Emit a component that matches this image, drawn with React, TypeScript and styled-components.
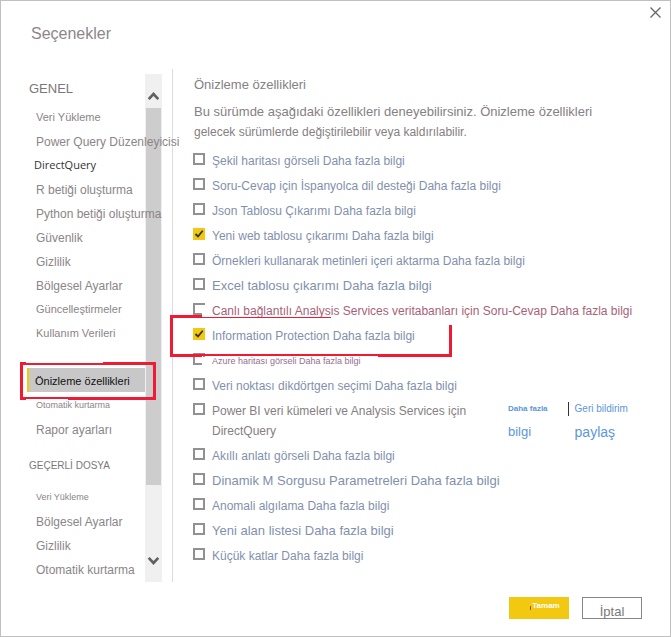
import React from 'react';
import styled, { createGlobalStyle } from 'styled-components';

const Global = createGlobalStyle`
  *, *::before, *::after { box-sizing: border-box; }
  body { margin: 0; background: #fff; font-family: "Liberation Sans", Arial, sans-serif; font-size: 12px; }
  button { font-family: inherit; }
  h1, h2, h3, p, ul { margin: 0; padding: 0; font-weight: 400; }
  ul { list-style: none; }
`;

const Dialog = styled.main`
  display: flex;
  flex-direction: column;
  min-height: 100vh;
  border: 1px solid #c0c0c0;
  background: #fff;
`;

const Header = styled.header`
  display: flex;
  justify-content: space-between;
  align-items: flex-start;
  height: 68px;
  padding: 5px 8px 0 30px;
`;

const Title = styled.h1`
  padding-top: 18px;
  font-size: 16px;
  line-height: 20px;
  color: #8c8789;
`;

const CloseButton = styled.button`
  display: flex;
  padding: 0;
  border: 0;
  background: none;
  color: #666;
`;

const Body = styled.div`
  display: grid;
  grid-template-columns: 171px minmax(0, 1fr);
  min-height: 513px;
`;

const Sidebar = styled.nav`
  position: relative;
  display: grid;
  grid-template-columns: 118px 17px;
  padding: 5px 0 0 26px;
`;

const Lists = styled.div`
  position: relative;
  z-index: 1;
  white-space: nowrap;
`;

const GroupTitle = styled.h2<{ $minor?: boolean }>`
  height: ${(p) => (p.$minor ? 34 : 31)}px;
  margin-top: ${(p) => (p.$minor ? 10 : 0)}px;
  padding: 3px 0 0 2px;
  font-size: ${(p) => (p.$minor ? 10 : 13)}px;
  line-height: 24px;
  color: #7b7779;
`;

const NavItem = styled.li<{ $size?: number; $spaced?: boolean }>`
  height: 24px;
  margin: ${(p) => (p.$spaced ? '23px 0 1px' : '0')};
  font-size: ${(p) => p.$size ?? 12}px;
  line-height: ${(p) => (p.$size && !p.$spaced ? 24 : 26)}px;
`;

const NavLink = styled.a<{ $current?: boolean; $dark?: boolean }>`
  display: block;
  height: 24px;
  padding-left: ${(p) => (p.$current ? 6 : p.$dark ? 7 : 9)}px;
  border-left: ${(p) => (p.$current ? '2px solid #f2c811' : '0')};
  background: ${(p) => (p.$current ? '#c8c8c8' : 'none')};
  color: ${(p) => (p.$current ? '#111' : p.$dark ? '#333' : '#8a8588')};
  font-family: ${(p) => (p.$dark ? '"Open Sans", "Noto Sans", sans-serif' : 'inherit')};
  text-decoration: none;
`;

const ScrollTrack = styled.div`
  display: grid;
  grid-template-rows: 34px 377px 1fr;
  justify-items: center;
  background: #f0f0f0;
  color: #606060;
`;

const ScrollButton = styled.button<{ $end?: boolean }>`
  display: flex;
  align-self: end;
  padding: 0;
  margin-bottom: ${(p) => (p.$end ? 16 : 7)}px;
  border: 0;
  background: none;
  color: inherit;
`;

const ScrollThumb = styled.div`
  width: 15px;
  background: #cdcdcd;
`;

const Content = styled.section`
  position: relative;
  padding: 4px 16px 0 21px;
  border-left: 1px solid #dcdcdc;
`;

const Heading = styled.h2`
  font-size: 13px;
  line-height: 24px;
  color: #858083;
`;

const Intro = styled.p<{ $size: number }>`
  font-size: ${(p) => p.$size}px;
  line-height: 20px;
  color: #858083;
`;

const IntroBlock = styled.div`
  padding-top: 5px;
  margin-bottom: 6px;
`;

const Option = styled.li<{ $tall?: boolean }>`
  display: flex;
  align-items: flex-start;
  height: ${(p) => (p.$tall ? 45 : 25)}px;
`;

const Check = styled.input`
  flex: none;
  appearance: none;
  width: 12px;
  height: 12px;
  margin: 5px 7px 0 -1px;
  border: 2px solid #919191;
  background: #fff;
  &:checked {
    border: 0;
    background: #f2c811 url("data:image/svg+xml,%3Csvg xmlns='http://www.w3.org/2000/svg' viewBox='0 0 12 12'%3E%3Cpath d='M2.5 6 5 8.5 9.7 2.8' fill='none' stroke='%23333' stroke-width='1.8'/%3E%3C/svg%3E");
  }
`;

const OptionLabel = styled.label<{ $tone: string; $size: number }>`
  padding-top: 3px;
  font-size: ${(p) => p.$size}px;
  line-height: 20px;
  color: ${(p) => p.$tone};
  white-space: nowrap;
`;

const Multiline = styled.span`
  display: block;
  width: 273px;
  white-space: normal;
`;

const LabelLine = styled.span`
  display: block;
`;

const SideLink = styled.a<{ $bar?: boolean }>`
  display: flex;
  flex-direction: column;
  margin-left: ${(p) => (p.$bar ? 20 : 16)}px;
  padding-top: 2px;
  color: #5b97dc;
  text-decoration: none;
`;

const LinkLine = styled.span<{ $size: number; $bold?: boolean; $bar?: boolean }>`
  padding-left: 6px;
  border-left: 1px solid ${(p) => (p.$bar ? '#333' : 'transparent')};
  font-size: ${(p) => p.$size}px;
  font-weight: ${(p) => (p.$bold ? 700 : 400)};
  line-height: ${(p) => (p.$size > 12 ? 24 : 14)}px;
  margin: ${(p) => (p.$size > 12 ? '2px 0 0' : '2px 0')};
  white-space: nowrap;
`;

const Callout = styled.svg<{ $place: 'nav' | 'option' }>`
  position: absolute;
  z-index: 2;
  pointer-events: none;
  fill: #f01a35;
  left: ${(p) => (p.$place === 'nav' ? 19 : -3)}px;
  top: ${(p) => (p.$place === 'nav' ? 293 : 236)}px;
`;

const Footer = styled.footer`
  display: flex;
  justify-content: flex-end;
  gap: 13px;
  padding: 15px 28px 17px;
`;

const Button = styled.button<{ $primary?: boolean }>`
  display: flex;
  justify-content: center;
  width: 60px;
  height: 22px;
  padding: ${(p) => (p.$primary ? '0 0 0 12px' : '5px 0 0')};
  border: ${(p) => (p.$primary ? '0' : '1px solid #868686')};
  background: ${(p) => (p.$primary ? '#f2c811' : '#fff')};
  font-size: ${(p) => (p.$primary ? 8 : 13)}px;
  font-weight: ${(p) => (p.$primary ? 700 : 400)};
  line-height: 18px;
  color: ${(p) => (p.$primary ? '#fff' : '#7b7779')};
`;

const Caret = styled.span`
  width: 1px;
  height: 4px;
  margin: 9px 1px 0 0;
  background: #a0522d;
`;

const Chevron = ({ down }: { down?: boolean }) => (
  <svg width="11" height="10" viewBox="0 0 11 10" fill="none" stroke="currentColor" strokeWidth="2.6">
    <path d={down ? 'M0.7 1.8 5.5 7 10.3 1.8' : 'M0.7 8.2 5.5 3 10.3 8.2'} />
  </svg>
);

const NavCallout = () => (
  <Callout $place="nav" width="136" height="38" viewBox="0 0 136 38" aria-hidden="true">
    <path d="M0 0H6V1H83V0H136V38H48V37H6V38H0ZM3 3V35H133V3Z" fillRule="evenodd" />
  </Callout>
);

const OptionCallout = () => (
  <Callout $place="option" width="282" height="62" viewBox="0 0 282 62" aria-hidden="true">
    <path d="M32 0H41V12H32ZM32 52H41V62H32Z" fill="#fff" />
    <path d="M0 10H32V12H161V13H3V49H279V20H282V52H208V51H32V52H0Z" />
  </Callout>
);

type Nav = { text: string; size?: number; current?: boolean; dark?: boolean };

const general: Nav[] = [
  { text: 'Veri Yükleme', size: 11 },
  { text: 'Power Query Düzenleyicisi' },
  { text: 'DirectQuery', size: 11, dark: true },
  { text: 'R betiği oluşturma' },
  { text: 'Python betiği oluşturma' },
  { text: 'Güvenlik' },
  { text: 'Gizlilik' },
  { text: 'Bölgesel Ayarlar' },
  { text: 'Güncelleştirmeler', size: 11 },
  { text: 'Kullanım Verileri', size: 11 },
  { text: 'Önizleme özellikleri', size: 11, current: true },
  { text: 'Otomatik kurtarma', size: 9 },
  { text: 'Rapor ayarları' },
];

const currentFile: Nav[] = [
  { text: 'Veri Yükleme', size: 9 },
  { text: 'Bölgesel Ayarlar' },
  { text: 'Gizlilik' },
  { text: 'Otomatik kurtarma' },
];

type Opt = { text: string; on?: boolean; tone?: string; size?: number };

const BLUE = '#8290ac';

const before: Opt[] = [
  { text: 'Şekil haritası görseli Daha fazla bilgi' },
  { text: 'Soru-Cevap için İspanyolca dil desteği Daha fazla bilgi' },
  { text: 'Json Tablosu Çıkarımı Daha fazla bilgi' },
  { text: 'Yeni web tablosu çıkarımı Daha fazla bilgi', on: true },
  { text: 'Örnekleri kullanarak metinleri içeri aktarma Daha fazla bilgi' },
  { text: 'Excel tablosu çıkarımı Daha fazla bilgi', size: 13 },
  { text: 'Canlı bağlantılı Analysis Services veritabanları için Soru-Cevap Daha fazla bilgi', tone: '#a95f78' },
  { text: 'Information Protection Daha fazla bilgi', on: true },
  { text: 'Azure haritası görseli Daha fazla bilgi', tone: '#94708f', size: 9 },
  { text: 'Veri noktası dikdörtgen seçimi Daha fazla bilgi' },
];

const after: Opt[] = [
  { text: 'Akıllı anlatı görseli Daha fazla bilgi' },
  { text: 'Dinamik M Sorgusu Parametreleri Daha fazla bilgi', size: 13 },
  { text: 'Anomali algılama Daha fazla bilgi' },
  { text: 'Yeni alan listesi Daha fazla bilgi', size: 13 },
  { text: 'Küçük katlar Daha fazla bilgi' },
];

const OptionRow = ({ item, id }: { item: Opt; id: string }) => (
  <Option>
    <Check type="checkbox" id={id} defaultChecked={item.on} />
    <OptionLabel htmlFor={id} $tone={item.tone ?? BLUE} $size={item.size ?? 12}>{item.text}</OptionLabel>
  </Option>
);

const NavList = ({ items }: { items: Nav[] }) => (
  <ul>
    {items.map((n) => (
      <NavItem key={n.text} $size={n.size} $spaced={n.current}>
        <NavLink href="#" $current={n.current} $dark={n.dark} aria-current={n.current ? 'page' : undefined}>{n.text}</NavLink>
      </NavItem>
    ))}
  </ul>
);

export default function App() {
  return (
    <>
      <Global />
      <Dialog>
        <Header>
          <Title>Seçenekler</Title>
          <CloseButton aria-label="Kapat">
            <svg width="13" height="13" viewBox="0 0 13 13" stroke="currentColor" strokeWidth="1.3">
              <path d="M1.5 1.5 11.5 11.5M11.5 1.5 1.5 11.5" />
            </svg>
          </CloseButton>
        </Header>
        <Body>
          <Sidebar>
            <Lists>
              <GroupTitle>GENEL</GroupTitle>
              <NavList items={general} />
              <GroupTitle $minor>GEÇERLİ DOSYA</GroupTitle>
              <NavList items={currentFile} />
            </Lists>
            <ScrollTrack>
              <ScrollButton aria-label="Yukarı kaydır"><Chevron /></ScrollButton>
              <ScrollThumb />
              <ScrollButton $end aria-label="Aşağı kaydır"><Chevron down /></ScrollButton>
            </ScrollTrack>
            <NavCallout />
          </Sidebar>
          <Content>
            <Heading>Önizleme özellikleri</Heading>
            <IntroBlock>
              <Intro $size={13}>Bu sürümde aşağıdaki özellikleri deneyebilirsiniz. Önizleme özellikleri</Intro>
              <Intro $size={12}>gelecek sürümlerde değiştirilebilir veya kaldırılabilir.</Intro>
            </IntroBlock>
            <ul>
              {before.map((item, i) => <OptionRow key={item.text} item={item} id={`b${i}`} />)}
              <Option $tall>
                <Check type="checkbox" id="dq" />
                <OptionLabel htmlFor="dq" $tone="#858083" $size={12}>
                  <Multiline>
                    <LabelLine>Power BI veri kümeleri ve Analysis Services için </LabelLine>
                    <LabelLine>DirectQuery</LabelLine>
                  </Multiline>
                </OptionLabel>
                <SideLink href="#">
                  <LinkLine $size={8} $bold>Daha fazla</LinkLine>
                  <LinkLine $size={13}>bilgi</LinkLine>
                </SideLink>
                <SideLink href="#" $bar>
                  <LinkLine $size={10} $bar>Geri bildirim</LinkLine>
                  <LinkLine $size={14}>paylaş</LinkLine>
                </SideLink>
              </Option>
              {after.map((item, i) => <OptionRow key={item.text} item={item} id={`a${i}`} />)}
            </ul>
            <OptionCallout />
          </Content>
        </Body>
        <Footer>
          <Button $primary><Caret />Tamam</Button>
          <Button>İptal</Button>
        </Footer>
      </Dialog>
    </>
  );
}
